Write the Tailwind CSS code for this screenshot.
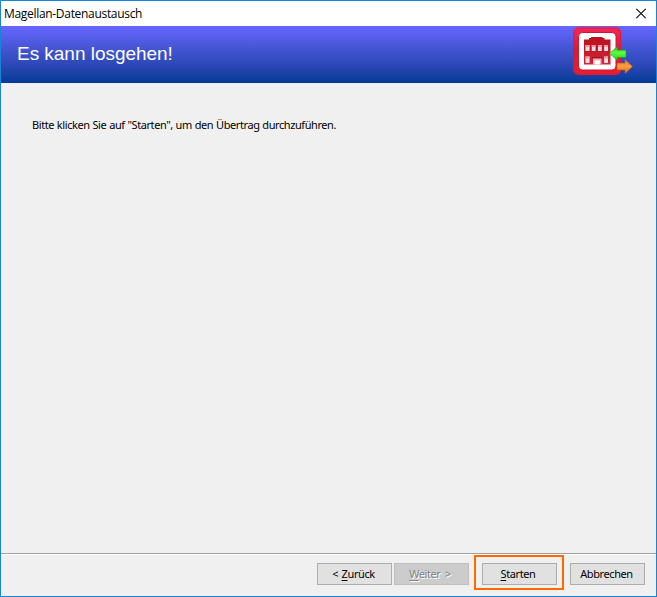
<!DOCTYPE html>
<html lang="de">
<head>
<meta charset="utf-8">
<title>Magellan-Datenaustausch</title>
<script src="https://cdn.jsdelivr.net/npm/@tailwindcss/browser@4"></script>
</head>
<body class="overflow-hidden">
<div class="flex h-[597px] w-[657px] flex-col border border-[#1883d7] bg-[#f0f0f0] font-['Open_Sans','Noto_Sans',sans-serif] text-black">
  <header class="flex h-[25px] shrink-0 items-center justify-between bg-white pr-[10px] pl-[3px]">
    <h1 class="text-[12px] leading-4 tracking-[-0.31px] whitespace-nowrap"><span>Magellan-Datenaustausch</span></h1>
    <svg class="h-[11px] w-[10px]" viewBox="0 0 10 11" fill="none" stroke="#000" stroke-width="1.1"><path d="M.3.800l9.400 9.400M9.700.800L.3 10.200"/></svg>
  </header>
  <div class="flex h-[57px] shrink-0 justify-between bg-linear-to-b from-[#6666ff] to-[#003b95] pr-[23px] pl-4">
    <h2 class="pt-[16px] font-['Liberation_Sans',sans-serif] text-[19px] leading-[24px] tracking-[-0.03px] whitespace-nowrap text-white"><span>Es kann losgehen!</span></h2>
    <svg class="mt-px h-[50px] w-[60px]" viewBox="573 27 60 50">
      <defs>
        <linearGradient id="red" x1="0" y1="0" x2="0" y2="1"><stop stop-color="#f02858"/><stop offset=".5" stop-color="#d91c32"/><stop offset="1" stop-color="#ed1c2e"/></linearGradient>
        <linearGradient id="house" x1="0" y1="0" x2="0" y2="1"><stop stop-color="#b8101c"/><stop offset="1" stop-color="#d0283a"/></linearGradient>
        <linearGradient id="green" x1="0" y1="0" x2="0" y2="1"><stop stop-color="#20b820"/><stop offset=".45" stop-color="#62ff42"/><stop offset="1" stop-color="#18c818"/></linearGradient>
        <linearGradient id="orange" x1="0" y1="0" x2="0" y2="1"><stop stop-color="#e47b20"/><stop offset=".5" stop-color="#ff9c40"/><stop offset="1" stop-color="#e46b00"/></linearGradient>
      </defs>
      <rect x="573" y="27" width="48.500" height="48" rx="6" fill="url(#red)"/>
      <rect x="574" y="28" width="46.500" height="46" rx="5.500" fill="none" stroke="#c8183c" stroke-opacity=".5"/>
      <rect x="578.500" y="32.500" width="37.500" height="37.500" rx="4" fill="#fff" stroke="#cf1730"/>
      <path d="M584 39.500h5v-1.500h2v-1h11.500v1h2v1.500h6V64.500H584z" fill="url(#house)"/>
      <path d="M585.500 45h4v6h-4zm6.300 0h3.700v6h-3.700zm6.200 0h3.700v6h-3.700zm6.200 0h3.800v6h-3.800zM585.500 56.500h4v6.500h-4zm18.700 0h3.800v6.500h-3.800z" fill="#fbdfe4"/>
      <path d="M585.500 45h4v2h-4zm6.300 0h3.700v2h-3.700zm6.200 0h3.700v2h-3.700zm6.200 0h3.800v2h-3.800zM585.500 56.500h4v2h-4zm18.700 0h3.800v2h-3.800z" fill="#ee9aa6"/>
      <path d="M592 57h10.500v1.500H592z" fill="#a90f20"/>
      <path d="M593 58.500h8.500v6H593z" fill="#f0b0b8"/>
      <path d="M594.500 60.500h5.500v4h-5.500z" fill="#fff"/>
      <path d="M609.500 53.500l8-7v3.500h8.500v7.500h-8.500v3z" fill="url(#green)" stroke="#15952c" stroke-width=".6"/>
      <path d="M617 63h8v-3.500l7.500 7-7.500 7v-3.500h-8z" fill="url(#orange)" stroke="#b75b20" stroke-width=".6"/>
    </svg>
  </div>
  <main class="grow pt-[34px] pl-[31px] font-['Noto_Sans',sans-serif] text-[11px] leading-4 whitespace-nowrap"><span class="tracking-[-0.42px] [word-spacing:0.4px]">Bitte klicken Sie auf "Starten", um den Übertrag durchzuführen.</span></main>
  <footer class="flex h-[43px] shrink-0 items-start justify-end border-t border-[#a0a0a0] pr-[11px] font-['Noto_Sans',sans-serif] text-[11px] leading-4 tracking-[-0.4px] shadow-[inset_0_1px_0_#fff]">
    <button class="mt-[9px] h-[22px] w-[75px] border border-[#adadad] bg-[#e1e1e1] pr-[2px] whitespace-nowrap [word-spacing:1px]">&lt; <u class="underline-offset-2">Z</u>urück</button>
    <button disabled class="mt-[9px] ml-[2px] h-[22px] w-[75px] border border-[#bfbfbf] bg-[#cccccc] pr-[3px] whitespace-nowrap text-[#838383] [text-shadow:1px_1px_0_#fff] [word-spacing:2px]"><u class="underline-offset-2">W</u>eiter &gt;</button>
    <div class="mt-px ml-[5px] flex h-[35px] w-[90px] items-start justify-center border-2 border-[#ff6a00] pt-[6px]">
      <button class="h-[22px] w-[75px] border border-[#adadad] bg-[#e1e1e1] pr-[2px] whitespace-nowrap"><u class="underline-offset-2">S</u>tarten</button>
    </div>
    <button class="mt-[9px] ml-[6px] h-[22px] w-[75px] border border-[#adadad] bg-[#e1e1e1] pr-[2px] whitespace-nowrap">Abbrechen</button>
  </footer>
</div>
</body>
</html>
